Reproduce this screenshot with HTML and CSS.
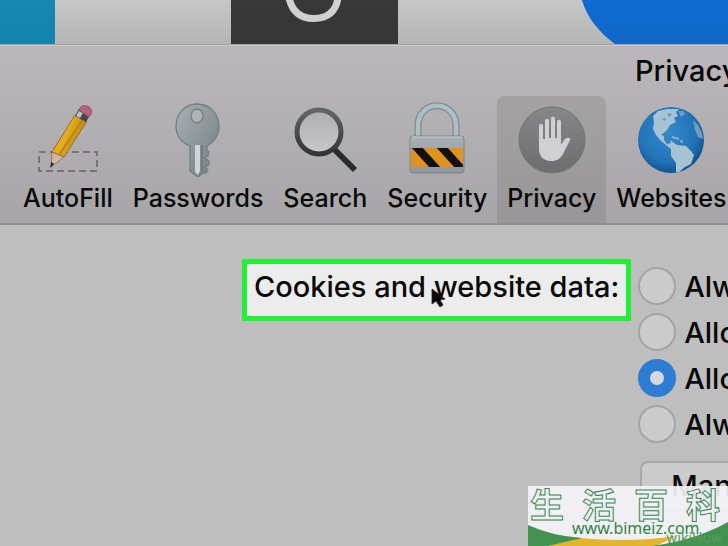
FILE: index.html
```html
<!DOCTYPE html>
<html lang="en">
<head>
<meta charset="utf-8">
<title>Privacy</title>
<link rel="stylesheet" href="styles.css">
</head>
<body>
<div class="desktop" aria-hidden="true">
  <svg class="tiles" width="728" height="44" viewBox="0 0 728 44">
    <defs><linearGradient id="shade" x1="0" y1="0" x2="0" y2="1"><stop offset="0" stop-color="#000" stop-opacity="0"/><stop offset="1" stop-color="#000" stop-opacity=".04"/></linearGradient></defs>
    <rect width="55" height="44" fill="#1588b3"/>
    <rect x="231" width="167" height="44" fill="#383838"/>
    <path d="M289-2C292 11 300 18.500 314 18.500S336 11 338-2" fill="none" stroke="#d2d2d2" stroke-width="7"/>
    <path d="M580-8C584 14 597 31 615 44H728V-8Z" fill="#106bd0"/>
    <rect width="728" height="44" fill="url(#shade)"/>
  </svg>
</div>
<main class="window">
  <header class="head">
    <h1 class="title">Privacy</h1>
    <nav class="toolbar">
      <button class="tab" type="button">
        <svg width="64" height="76" viewBox="0 0 64 76">
          <defs><linearGradient id="wood" x1="0" y1="0" x2="1" y2=".5"><stop offset="0" stop-color="#dda51c"/><stop offset=".5" stop-color="#e6ad1d"/><stop offset="1" stop-color="#ad7b18"/></linearGradient></defs>
          <rect x="3" y="51" width="58" height="19" fill="none" stroke="#77757a" stroke-width="2" stroke-dasharray="7 4"/>
          <path d="M39 14 51 20 28 56 16 51Z" fill="url(#wood)" stroke="#94702b"/>
          <path d="M47 18 23 54" stroke="#bd8517" stroke-width="2"/>
          <path d="M16 51 28 56 15 66Z" fill="#d0b69c" stroke="#796756" stroke-width=".7"/>
          <path d="M15.500 61 18 63 14 67Z" fill="#222"/>
          <path d="M43 8 54 14 50 21 39 15Z" fill="#44474b"/><path d="M43 10 47 12 44 17 40 15Z" fill="#bdc1c2"/>
          <path d="M43 9C45 1 58 5 55 13L53 16Z" fill="#b8607f" stroke="#914b66"/>
        </svg>
        <span>AutoFill</span>
      </button>
      <button class="tab" type="button">
        <svg width="64" height="76" viewBox="0 0 64 76">
          <defs><linearGradient id="steel" x1="0" y1="0" x2="1" y2="1"><stop offset="0" stop-color="#a7b0b3"/><stop offset=".6" stop-color="#879297"/><stop offset="1" stop-color="#707a7e"/></linearGradient></defs>
          <path fill-rule="evenodd" d="M31 3C43 3 53 12 53 25 53 35 47 42 41 45V49L43 51 42 55 39 57 43 60 43 64 39 66 42 69 40 72 37 72 32 76 24 70V45C16 42 10 35 10 25 10 12 20 3 31 3ZM31 8A6 7 0 1 0 31 22 6 7 0 1 0 31 8Z" fill="url(#steel)" stroke="#747e82" stroke-width="1.300"/>
          <path d="M29 44H34V70L32 74 29 71Z" fill="#ced3d4"/><path d="M36 44V71" stroke="#717b80" stroke-width="2"/>
        </svg>
        <span>Passwords</span>
      </button>
      <button class="tab" type="button">
        <svg width="66" height="76" viewBox="0 0 66 76">
          <defs><linearGradient id="lens" x1="0" y1="0" x2="0" y2="1"><stop offset="0" stop-color="#b0aeb1"/><stop offset="1" stop-color="#c7c6c8"/></linearGradient><linearGradient id="rim" x1="0" y1="0" x2="0" y2="1"><stop offset="0" stop-color="#646366"/><stop offset="1" stop-color="#343436"/></linearGradient></defs>
          <path d="M42 48 63 69" stroke="#2b2b2d" stroke-width="6"/>
          <circle cx="27" cy="31" r="22" fill="url(#lens)" stroke="url(#rim)" stroke-width="5"/>
        </svg>
        <span>Search</span>
      </button>
      <button class="tab" type="button">
        <svg width="60" height="76" viewBox="0 0 60 76">
          <defs><clipPath id="band"><rect x="4" y="47" width="52" height="19"/></clipPath><linearGradient id="body" x1="0" y1="0" x2="0" y2="1"><stop offset="0" stop-color="#aab0b4"/><stop offset="1" stop-color="#8e979d"/></linearGradient></defs>
          <path d="M11 36V25C11-2 49-2 49 25V36" fill="none" stroke="#7d8b92" stroke-width="7"/>
          <path d="M11 36V25C11-2 49-2 49 25V36" fill="none" stroke="#afbec4" stroke-width="4.500"/>
          <rect x="3" y="35" width="54" height="37" rx="3" fill="url(#body)" stroke="#7f878c"/>
          <path d="M5 36H55" stroke="#c3cacd"/>
          <g clip-path="url(#band)"><rect x="4" y="47" width="52" height="19" fill="#df931e"/><path d="M4 46H15L34 67H23ZM29 46H40L59 67H48Z" fill="#11100e"/></g>
        </svg>
        <span>Security</span>
      </button>
      <button class="tab active" type="button" aria-current="page">
        <svg width="70" height="76" viewBox="0 0 70 76">
          <defs><linearGradient id="disc" x1="0" y1="0" x2="0" y2="1"><stop offset="0" stop-color="#888688"/><stop offset="1" stop-color="#6d6c6e"/></linearGradient></defs>
          <circle cx="35" cy="39" r="33" fill="url(#disc)" stroke="#737274"/>
          <path d="M22 25C22 22 26 22 26 25V38H28V20C28 17 32 17 32 20V37H34V18C34 15 38 15 38 18V37H40V21C40 18 44 18 44 21V43C46 43 46 38 50 37 53 36 54 38 53 39L47 51C44 58 40 60 34 60 26 60 22 55 22 48Z" fill="#d0cfd1"/>
        </svg>
        <span>Privacy</span>
      </button>
      <button class="tab" type="button">
        <svg width="70" height="76" viewBox="0 0 70 76">
          <defs><radialGradient id="sea" cx=".45" cy=".4" r=".6"><stop offset="0" stop-color="#3489cb"/><stop offset=".7" stop-color="#2274b9"/><stop offset="1" stop-color="#145393"/></radialGradient></defs>
          <circle cx="35" cy="39" r="33" fill="url(#sea)"/>
          <path d="M17 15 22 10 31 8 43 8 40 11 42 15 38 17 40 21 34 24 31 29 25 34 28 35 28 39 31 43 35 42 34 39 41 44 50 45 55 50 58 54 55 63 49 66 43 71 40 71 40 62 35 55 35 48 30 44 24 39 20 34 17 28 18 22Z" fill="#a6c3d3"/>
          <path d="M42 10 47 10 49 13 45 16ZM57 19 62 24 66 32 67 38 62 36 59 29Z" fill="#6e9fc0"/>
          <path d="M31 12 36 13 33 16ZM26 18 30 17 29 20Z" fill="#559bc8"/>
          <path d="M36 36 43 38M44 40 47 41" stroke="#80b0cd" stroke-width="2"/>
        </svg>
        <span>Websites</span>
      </button>
    </nav>
  </header>
  <form class="content">
    <div class="callout" id="cookies-label">Cookies and website data:
      <svg class="cursor" width="15" height="20" viewBox="0 0 15 20"><path d="M1 1V16L5 13 9 19 12 17 9 12 14 11Z" fill="#080808" stroke="#222" stroke-width=".8"/></svg>
    </div>
    <div class="choices" role="radiogroup" aria-labelledby="cookies-label">
      <label class="choice"><input type="radio" name="cookies">Always</label>
      <label class="choice"><input type="radio" name="cookies">Allow</label>
      <label class="choice"><input type="radio" name="cookies" checked>Allow</label>
      <label class="choice"><input type="radio" name="cookies">Always</label>
      <button class="manage" type="button">Manage</button>
    </div>
  </form>
</main>
<aside class="mark">
  <div class="glyphs" lang="zh"><span>生</span><span>活</span><span>百</span><span>科</span></div>
  <div class="site">www.bimeiz.com</div>
  <div class="how">wikiHow</div>
  <svg class="waves" width="200" height="60" viewBox="0 0 200 60">
    <path d="M50 52Q105 57 148 50L128 60H20Z" fill="#e3b52d"/>
    <path d="M0 39Q24 50 54 52L20 60H0Z" fill="#44924f"/>
    <path d="M124 60Q168 54 200 36V60Z" fill="#44924f"/>
  </svg>
</aside>
</body>
</html>
```
FILE: styles.css
```css
* { box-sizing: border-box; }

body {
  margin: 0;
  min-height: 100vh;
  overflow: hidden;
  display: flex;
  flex-direction: column;
  position: relative;
  background: #bebebe;
  color: #080808;
  font-family: Inter, "Liberation Sans", sans-serif;
}

button {
  font: inherit;
  color: inherit;
}

.desktop {
  background: linear-gradient(#c6c6c6, #bcbcbc);
  border-bottom: 1px solid #a5a5a5;
}

.tiles { display: block; }

.window {
  flex: 1;
  overflow: hidden;
  border-top: 1px solid #c8c7c8;
}

.head {
  background: linear-gradient(#bbb8bb, #a7a5a7);
  border-bottom: 2px solid #929092;
}

.title {
  margin: 0;
  padding: 7px 0 7px 635px;
  font-size: 29px;
  line-height: 36px;
  font-weight: 450;
  white-space: nowrap;
}

.toolbar {
  display: flex;
  padding-left: 13px;
}

.tab {
  flex: none;
  display: flex;
  flex-direction: column;
  align-items: center;
  gap: 4px;
  padding: 5px 10px 7px;
  border: 0;
  background: none;
  border-radius: 8px 8px 0 0;
  font-size: 25px;
  line-height: 35px;
  font-weight: 500;
}

.tab svg { display: block; }

.active { background: linear-gradient(#a5a2a4, #989698); }

.content {
  display: flex;
  align-items: flex-start;
  gap: 7px;
  padding: 34px 0 0 242px;
  font-size: 29px;
  font-weight: 450;
  white-space: nowrap;
}

.callout {
  flex: none;
  position: relative;
  padding: 7px 7px 13px;
  border: 5px solid #24ef38;
  background: #ececec;
  line-height: 32px;
}

.cursor {
  position: absolute;
  left: 184px;
  top: 24px;
}

.choices {
  flex: none;
  padding-top: 4px;
}

.choice {
  display: flex;
  align-items: center;
  gap: 8px;
  height: 46px;
}

.choice input {
  appearance: none;
  margin: 0;
  width: 38px;
  height: 38px;
  border: 2px solid #a4a4a4;
  border-radius: 50%;
  background: #cbcbcb;
}

.choice input:checked {
  border: 12px solid #2e7dd3;
  background: #d3d9df;
}

.manage {
  display: block;
  margin: 14px 0 0 2px;
  padding: 4px 29px;
  border: 2px solid #a8a8a8;
  border-radius: 8px;
  background: #cbcbcb;
  line-height: 38px;
}

.mark {
  position: absolute;
  right: 0;
  bottom: 0;
  width: 200px;
  height: 60px;
  overflow: hidden;
  background: rgb(244 244 248 / 92%);
  color: #2f8446;
}

.glyphs {
  display: grid;
  grid-template-columns: repeat(4, 52px);
  padding-left: 2px;
  font-family: "Noto Sans CJK SC", sans-serif;
  font-size: 34px;
  line-height: 35px;
  font-weight: 700;
  color: transparent;
  -webkit-text-stroke: 1px #398750;
}

.site {
  position: relative;
  z-index: 1;
  padding-left: 44px;
  font-family: "Noto Sans", sans-serif;
  font-size: 16px;
  line-height: 15px;
}

.how {
  position: absolute;
  z-index: 1;
  right: 6px;
  bottom: 0;
  color: #599958;
  font-size: 14px;
  line-height: 16px;
}

.waves {
  position: absolute;
  inset: 0;
}
```
